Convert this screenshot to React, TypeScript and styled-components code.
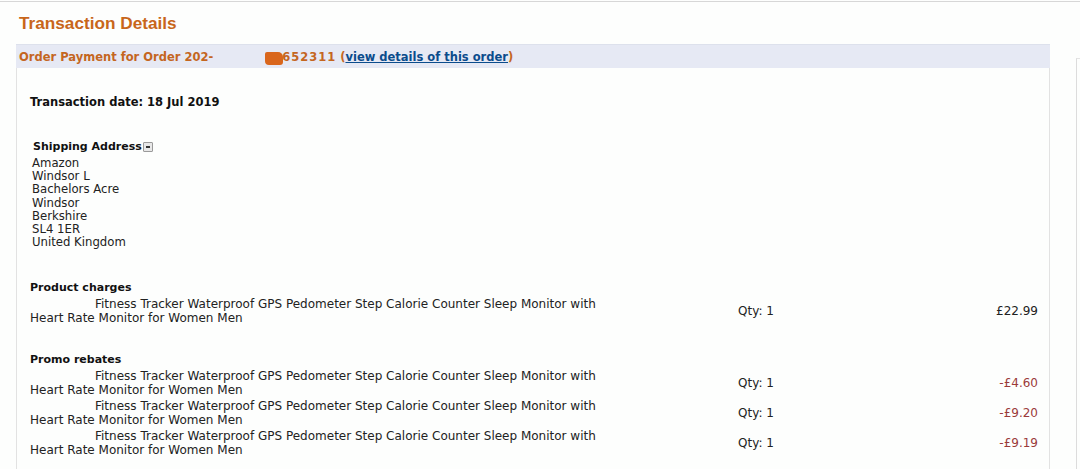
import styled, { createGlobalStyle } from "styled-components";

const GlobalStyle = createGlobalStyle`
  body {
    margin: 0;
    background: #fdfefd;
    color: #1f1f1f;
    font-family: "DejaVu Sans", Verdana, sans-serif;
  }
`;

type Item = { qty: number; amount: string };

const charges: Item[] = [{ qty: 1, amount: "£22.99" }];
const rebates: Item[] = [
  { qty: 1, amount: "-£4.60" },
  { qty: 1, amount: "-£9.20" },
  { qty: 1, amount: "-£9.19" },
];

const address = [
  "Amazon",
  "Windsor L",
  "Bachelors Acre",
  "Windsor",
  "Berkshire",
  "SL4 1ER",
  "United Kingdom",
];

const ItemRows = ({ items, negative }: { items: Item[]; negative?: boolean }) => (
  <ItemList>
    {items.map((item, i) => (
      <ItemRow key={i}>
        <Description>
          <Redacted $w={65} />
          Fitness Tracker Waterproof GPS Pedometer Step Calorie Counter Sleep Monitor with
          <br />
          Heart Rate Monitor for Women Men
        </Description>
        <Qty>Qty: {item.qty}</Qty>
        <Amount $negative={negative}>{item.amount}</Amount>
      </ItemRow>
    ))}
  </ItemList>
);

const App = () => {
  return (
    <>
      <GlobalStyle />
      <Page>
        <Main>
          <Title>Transaction Details</Title>
          <Panel>
            <PanelHead>
              Order Payment for Order 202-
              <Redacted $w={52} />
              <Blot />
              <OrderNo>652311</OrderNo> (<OrderLink href="#">view details of this order</OrderLink>)
            </PanelHead>
            <PanelBody>
              <DateLine>Transaction date: 18 Jul 2019</DateLine>

              <AddressHead>
                Shipping Address
                <Toggle />
              </AddressHead>
              <AddressBlock>
                {address.map((line) => (
                  <div key={line}>{line}</div>
                ))}
              </AddressBlock>

              <SectionHead $gap={32}>Product charges</SectionHead>
              <ItemRows items={charges} />

              <SectionHead $gap={26}>Promo rebates</SectionHead>
              <ItemRows items={rebates} negative />
            </PanelBody>
          </Panel>
        </Main>
        <Aside />
      </Page>
    </>
  );
};

export default App;

const Page = styled.div`
  display: flex;
  margin-top: 1px;
  border-top: 1px solid #d7d7d7;
  min-height: 467px;
  overflow: hidden;
`;

const Main = styled.div`
  width: 1034px;
  margin-left: 16px;
  display: flex;
  flex-direction: column;
`;

const Title = styled.h1`
  margin: 0;
  padding: 11px 0 0 3px;
  height: 20px;
  margin-bottom: 11px;
  font-family: "Liberation Sans", Arial, sans-serif;
  font-size: 17.2px;
  line-height: 20px;
  font-weight: bold;
  color: #c8661a;
`;

const Panel = styled.div`
  flex: 1;
  display: flex;
  flex-direction: column;
`;

const PanelHead = styled.div`
  height: 23px;
  border-top: 1px solid #dde1ec;
  background: #e6e9f4;
  padding-left: 3px;
  display: flex;
  align-items: center;
  font-size: 11.5px;
  font-weight: bold;
  color: #c4661f;
  white-space: pre;
`;

const OrderNo = styled.span`
  letter-spacing: 1px;
`;

const Redacted = styled.span<{ $w: number }>`
  display: inline-block;
  width: ${({ $w }) => $w}px;
  height: 12px;
  vertical-align: middle;
`;

const Blot = styled.span`
  display: inline-block;
  width: 18px;
  height: 13px;
  margin-top: 4px;
  margin-right: -1px;
  border-radius: 2px 5px 3px 4px;
  background: #d9661c;
`;

const OrderLink = styled.a`
  color: #0b4c8c;
  text-decoration: underline;
`;

const PanelBody = styled.div`
  flex: 1;
  border-left: 1px solid #e2e2e2;
  border-right: 1px solid #e2e2e2;
  padding: 27px 11px 0 13px;
`;

const DateLine = styled.div`
  font-size: 11.5px;
  font-weight: bold;
  line-height: 14px;
  color: #111;
`;

const AddressHead = styled.div`
  margin: 31px 0 0 3px;
  display: flex;
  align-items: center;
  font-size: 11px;
  font-weight: bold;
  line-height: 14px;
  color: #111;
`;

const Toggle = styled.span`
  position: relative;
  width: 8px;
  height: 8px;
  margin-left: 1px;
  border: 1px solid #9a9a9a;
  border-radius: 1px;
  background: #e8e8e8;

  &::after {
    content: "";
    position: absolute;
    left: 2px;
    top: 3px;
    width: 4px;
    height: 2px;
    background: #333;
  }
`;

const AddressBlock = styled.div`
  margin: 3px 0 0 2px;
  font-size: 11.7px;
  line-height: 13.2px;
  color: #222;
`;

const SectionHead = styled.div<{ $gap?: number }>`
  margin-top: ${({ $gap }) => $gap ?? 31}px;
  font-size: 11px;
  font-weight: bold;
  line-height: 14px;
  color: #111;
`;

const ItemList = styled.div`
  padding-top: 2px;
`;

const ItemRow = styled.div`
  display: grid;
  grid-template-columns: 708px 1fr auto;
  align-items: center;
  padding-bottom: 2px;
  font-size: 12px;
  line-height: 14px;
  color: #222;
`;

const Description = styled.div`
  white-space: nowrap;
`;

const Qty = styled.div``;

const Amount = styled.div<{ $negative?: boolean }>`
  text-align: right;
  color: ${({ $negative }) => ($negative ? "#9b3a3a" : "#222")};
`;

const Aside = styled.div`
  flex: 1;
  margin: 56px 0 0 26px;
  border-left: 1px solid #dcdcdc;
  border-top: 1px solid #e4e4e4;
`;
